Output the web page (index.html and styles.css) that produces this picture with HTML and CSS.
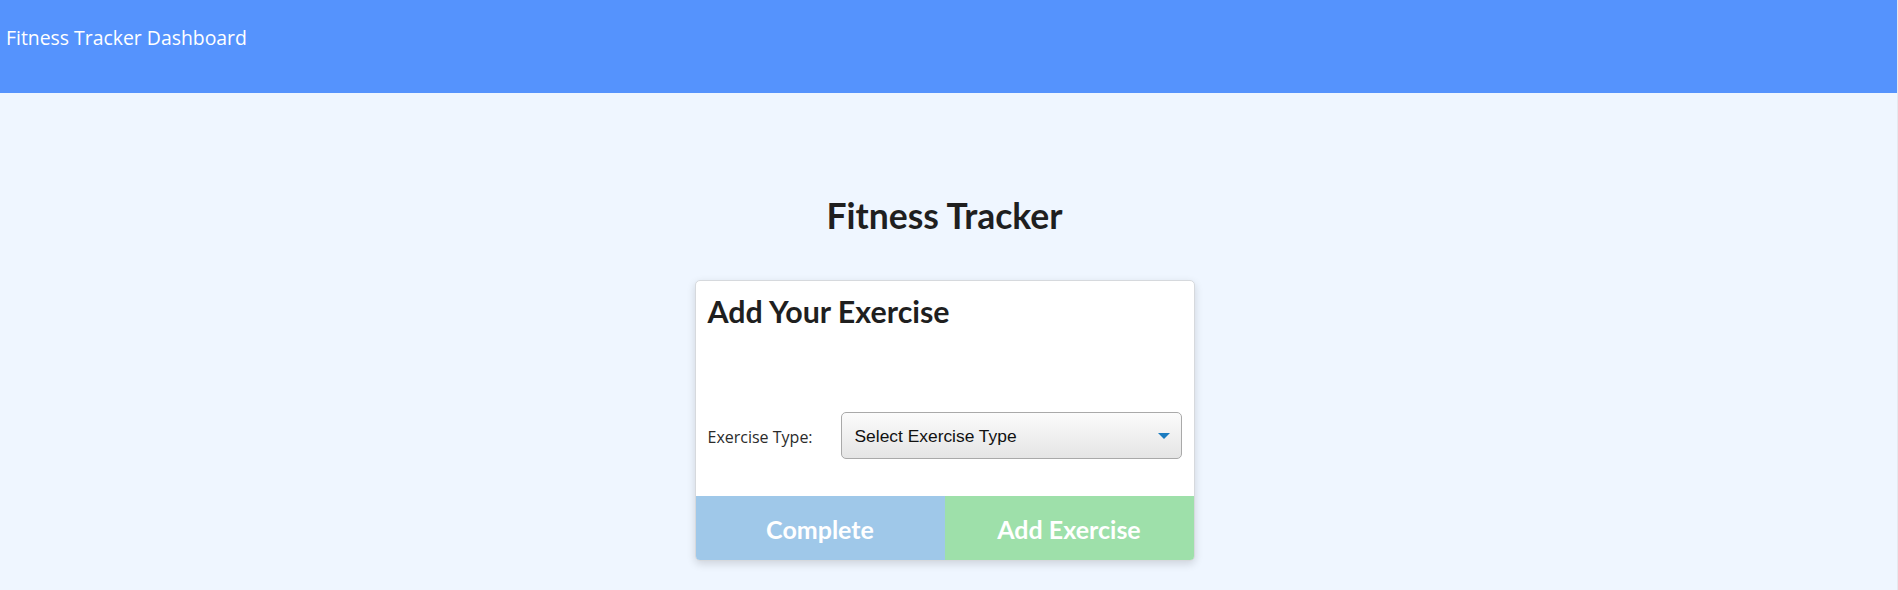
FILE: index.html
```html
<!DOCTYPE html>
<html lang="en">
<head>
<meta charset="utf-8">
<title>Fitness Tracker Dashboard</title>
<link rel="stylesheet" href="styles.css">
</head>
<body>
<header class="topbar">
  <span class="brand">Fitness Tracker Dashboard</span>
</header>
<main class="page">
  <h1 class="page-title">Fitness Tracker</h1>
  <section class="card">
    <div class="card-body">
      <h2 class="card-title">Add Your Exercise</h2>
      <div class="form-row">
        <label class="form-label" for="type">Exercise Type:</label>
        <div class="select-wrap">
          <select id="type" class="select">
            <option>Select Exercise Type</option>
            <option>Cardio</option>
            <option>Resistance</option>
          </select>
          <svg class="select-arrow" width="12" height="6" viewBox="0 0 12 6" aria-hidden="true"><path d="M0 0H12L6 6Z" fill="#1b7cc0"/></svg>
        </div>
      </div>
    </div>
    <div class="card-actions">
      <button class="btn btn-complete" type="button">Complete</button>
      <button class="btn btn-add" type="button">Add Exercise</button>
    </div>
  </section>
</main>
</body>
</html>
```
FILE: styles.css
```css
html, body {
  margin: 0;
  padding: 0;
}
body {
  background: #eff6ff;
  min-height: 590px;
  border-right: 1px solid #e6e9ee;
  box-sizing: border-box;
}
.topbar {
  height: 93px;
  background: #5593fd;
  box-sizing: border-box;
  padding: 24px 0 0 6px;
}
.brand {
  font-family: "Open Sans", "Noto Sans", sans-serif;
  font-size: 19.4px;
  color: #ffffff;
  line-height: 27px;
}
.page {
  display: flex;
  flex-direction: column;
  align-items: center;
  padding-right: 8px;
}
.page-title {
  font-family: Lato, "Liberation Sans", sans-serif;
  font-weight: 700;
  font-size: 35.5px;
  line-height: 44px;
  color: #1f1f1f;
  margin: 101px 0 42px 0;
}
.card {
  width: 500px;
  background: #ffffff;
  border: 1px solid #d6d9dd;
  border-radius: 5px;
  box-shadow: 0 3px 8px rgba(0, 0, 0, 0.14);
  overflow: hidden;
  box-sizing: border-box;
}
.card-body {
  padding: 12px 12px 37px 12px;
}
.card-title {
  font-family: Lato, "Liberation Sans", sans-serif;
  font-weight: 700;
  font-size: 30.4px;
  line-height: 37px;
  color: #1f1f1f;
  margin: 0 0 82px 0;
}
.form-row {
  display: flex;
  align-items: center;
}
.form-label {
  font-family: "Open Sans", "Noto Sans", sans-serif;
  font-weight: 400;
  font-size: 16px;
  color: #2b2b2b;
  width: 133px;
  padding-top: 2px;
}
.select-wrap {
  position: relative;
  flex: 1;
}
.select {
  appearance: none;
  -webkit-appearance: none;
  width: 100%;
  height: 47px;
  box-sizing: border-box;
  border: 1px solid #a9a9a9;
  border-radius: 5px;
  background: linear-gradient(#fbfbfb, #e5e5e5);
  font-family: "Liberation Sans", Arial, sans-serif;
  font-size: 17.4px;
  color: #111111;
  padding: 0 36px 0 13px;
  margin: 0;
}
.select-arrow {
  position: absolute;
  right: 12px;
  top: 21px;
  pointer-events: none;
}
.card-actions {
  display: flex;
}
.btn {
  flex: 1;
  height: 64px;
  border: 0;
  margin: 0;
  padding: 2px 0 0 0;
  font-family: Lato, "Liberation Sans", sans-serif;
  font-weight: 700;
  font-size: 25px;
  color: #ffffff;
  cursor: pointer;
}
.btn-complete {
  background: #9fc8e9;
}
.btn-add {
  background: #9ee0aa;
}
```
